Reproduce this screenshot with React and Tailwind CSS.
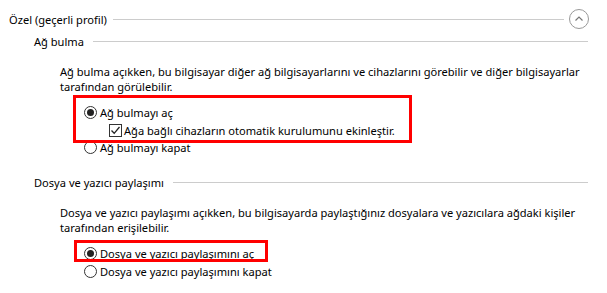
import React from "react";

function Radio({ checked }) {
  return (
    <span className="relative inline-flex h-[13px] w-[13px] shrink-0 items-center justify-center rounded-full border border-[#333] bg-white">
      {checked && <span className="h-[7px] w-[7px] rounded-full bg-[#222]" />}
    </span>
  );
}

function Check() {
  return (
    <span className="inline-flex h-[13px] w-[13px] shrink-0 items-center justify-center border border-[#333] bg-white">
      <svg width="11" height="11" viewBox="0 0 11 11">
        <path d="M1.5 5.5 L4.2 8.3 L9.5 2" fill="none" stroke="#222" strokeWidth="1.3" />
      </svg>
    </span>
  );
}

function SectionTitle({ children }) {
  return (
    <div className="flex items-center pl-[34px] pr-[19px]">
      <span>{children}</span>
      <span className="ml-[9px] h-px flex-1 bg-[#cccccc]" />
    </div>
  );
}

export default function App() {
  return (
    <div
      className="relative h-[293px] w-[607px] overflow-hidden bg-white text-[11.1px] leading-[15px] text-black"
      style={{ fontFamily: '"Segoe UI", "Noto Sans", sans-serif' }}
    >
      {/* profile header */}
      <div className="flex items-center pl-[9px] pr-[18px] pt-[9px]">
        <span>Özel (geçerli profil)</span>
        <span className="ml-[6px] h-px flex-1 bg-[#cccccc]" />
        <span className="ml-[5px] flex h-[20px] w-[20px] items-center justify-center rounded-full border border-[#999]">
          <svg width="10" height="10" viewBox="0 0 10 10">
            <path d="M1.5 6.5 L5 3 L8.5 6.5" fill="none" stroke="#777" strokeWidth="1.2" />
          </svg>
        </span>
      </div>

      <div className="mt-[5px]">
        <SectionTitle>Ağ bulma</SectionTitle>
      </div>

      <p className="mt-[15px] pl-[60px] pr-[20px]">
        Ağ bulma açıkken, bu bilgisayar diğer ağ bilgisayarlarını ve cihazlarını görebilir ve diğer bilgisayarlar
        tarafından görülebilir.
      </p>

      <div className="mt-[11px] flex flex-col pl-[84px]">
        <label className="flex items-center gap-[3px]">
          <Radio checked />
          <span>Ağ bulmayı aç</span>
        </label>
        <label className="ml-[25px] mt-[3px] flex items-center gap-[2px]">
          <Check />
          <span>Ağa bağlı cihazların otomatik kurulumunu ekinleştir.</span>
        </label>
        <label className="mt-[2px] flex items-center gap-[3px]">
          <Radio />
          <span>Ağ bulmayı kapat</span>
        </label>
      </div>

      <div className="mt-[20px]">
        <SectionTitle>Dosya ve yazıcı paylaşımı</SectionTitle>
      </div>

      <p className="mt-[15px] pl-[60px] pr-[20px]">
        Dosya ve yazıcı paylaşımı açıkken, bu bilgisayarda paylaştığınız dosyalara ve yazıcılara ağdaki kişiler
        tarafından erişilebilir.
      </p>

      <div className="mt-[11px] flex flex-col pl-[84px]">
        <label className="flex items-center gap-[3px]">
          <Radio checked />
          <span>Dosya ve yazıcı paylaşımını aç</span>
        </label>
        <label className="mt-[3px] flex items-center gap-[3px]">
          <Radio />
          <span>Dosya ve yazıcı paylaşımını kapat</span>
        </label>
      </div>

      {/* red highlight annotations */}
      <div className="absolute left-[73px] top-[95px] h-[48px] w-[339px] border-[3px] border-[#ff0000]" />
      <div className="absolute left-[74px] top-[240px] h-[22px] w-[194px] border-[3px] border-[#ff0000]" />
    </div>
  );
}
